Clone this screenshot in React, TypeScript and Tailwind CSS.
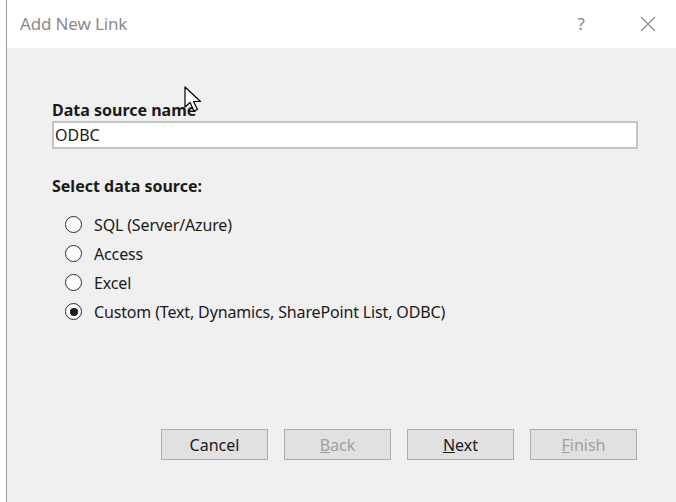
const font = { fontFamily: '"Noto Sans", "Open Sans", sans-serif' };

const sources = [
  { label: "SQL (Server/Azure)", checked: false },
  { label: "Access", checked: false },
  { label: "Excel", checked: false },
  { label: "Custom (Text, Dynamics, SharePoint List, ODBC)", checked: true },
];

function Radio({ label, checked }: { label: string; checked: boolean }) {
  return (
    <label className="flex h-[29px] items-center">
      <span className="ml-[13px] flex h-[17px] w-[17px] items-center justify-center rounded-full border-[1.7px] border-[#2a2a2a] bg-white">
        {checked && <span className="h-[8px] w-[8px] rounded-full bg-[#1a1a1a]" />}
      </span>
      <span className="ml-[12px] text-[16px] tracking-[-0.15px] text-[#1a1a1a]">{label}</span>
    </label>
  );
}

function WizardButton({
  children,
  disabled,
}: {
  children: React.ReactNode;
  disabled?: boolean;
}) {
  return (
    <button
      className={
        "h-[31px] w-[107px] border border-[#adadad] bg-[#e1e1e1] text-[16px] " +
        (disabled ? "text-[#a0a0a0]" : "text-[#1a1a1a]")
      }
    >
      {children}
    </button>
  );
}

// pointer sitting over the label
function Cursor() {
  return (
    <svg
      className="pointer-events-none absolute left-[184px] top-[86px]"
      width="22"
      height="27"
      viewBox="0 0 22 27"
    >
      <path
        d="M1 1 L1 21 L6 16.5 L10 25 L13.5 23.5 L9.5 15.5 L16.5 15.5 Z"
        fill="#fff"
        stroke="#000"
        strokeWidth="1.2"
        strokeLinejoin="round"
      />
    </svg>
  );
}

function CloseIcon() {
  return (
    <svg width="16" height="16" viewBox="0 0 16 16" className="mr-[20px]">
      <path d="M1 1 L15 15 M15 1 L1 15" stroke="#8a8a8a" strokeWidth="1.2" />
    </svg>
  );
}

export default function App() {
  return (
    <div className="relative flex h-[502px] w-[676px] bg-white" style={font}>
      <div className="w-[6px]" />
      <div className="flex flex-1 flex-col border-l border-[#9c9c9c]">
        <div className="flex h-[48px] items-center bg-white pl-[13px]">
          <span className="flex-1 text-[17px] tracking-[-0.15px] text-[#8a8a8a]">Add New Link</span>
          <span className="mr-[55px] text-[17px] text-[#8a8a8a]">?</span>
          <CloseIcon />
        </div>
        <div className="flex flex-1 flex-col bg-[#f0f0f0] pl-[45px] pr-[38px]">
          <div className="mt-[52px] text-[16px] font-bold leading-[20px] text-[#1a1a1a]">
            Data source name
          </div>
          <div className="mt-[1px] flex h-[28px] items-center border-2 border-[#c4c4c4] bg-white pl-[1px] text-[16px] text-[#1a1a1a]">
            ODBC
          </div>
          <div className="mt-[27px] text-[16px] font-bold leading-[20px] text-[#1a1a1a]">
            Select data source:
          </div>
          <div className="mt-[14px] flex flex-col">
            {sources.map((s) => (
              <Radio key={s.label} label={s.label} checked={s.checked} />
            ))}
          </div>
          <div className="mt-[103px] flex justify-end gap-[16px] pr-[1px]">
            <WizardButton>Cancel</WizardButton>
            <WizardButton disabled>
              <span className="underline">B</span>ack
            </WizardButton>
            <WizardButton>
              <span className="underline">N</span>ext
            </WizardButton>
            <WizardButton disabled>
              <span className="underline">F</span>inish
            </WizardButton>
          </div>
        </div>
      </div>
      <Cursor />
    </div>
  );
}
